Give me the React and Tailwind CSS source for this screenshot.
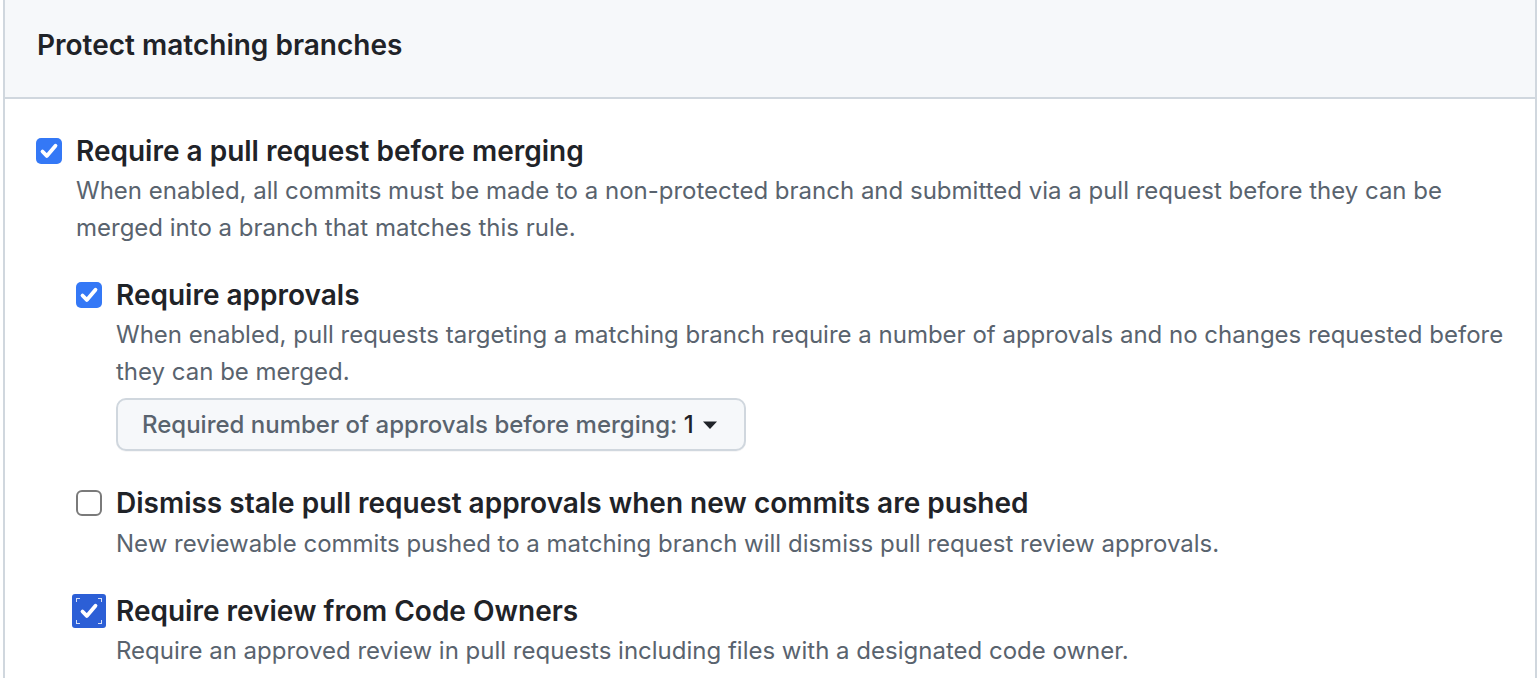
import React from 'react';

const font = { fontFamily: 'Inter, "Noto Sans", sans-serif' };

function Tick() {
  return (
    <svg width="20" height="20" viewBox="0 0 20 20" fill="none">
      <path d="M3.5 10.5l4.3 4.4L16.5 4.8" stroke="white" strokeWidth="3.8" strokeLinecap="round" strokeLinejoin="round" />
    </svg>
  );
}

function Check({ checked, focused }) {
  if (focused) {
    return (
      <span className="relative -mx-1 flex h-[34px] w-[34px] shrink-0 items-center justify-center rounded-[3px] bg-[#2c5fd6]">
        <span className="absolute left-[4px] top-[4px] h-[4px] w-[4px] border-l border-t border-white/80" />
        <span className="absolute right-[4px] top-[4px] h-[4px] w-[4px] border-r border-t border-white/80" />
        <span className="absolute bottom-[4px] left-[4px] h-[4px] w-[4px] border-b border-l border-white/80" />
        <span className="absolute bottom-[4px] right-[4px] h-[4px] w-[4px] border-b border-r border-white/80" />
        <Tick />
      </span>
    );
  }
  if (!checked) {
    return <span className="h-[26px] w-[26px] shrink-0 rounded-[6px] border-2 border-[#7a7a7a] bg-white" />;
  }
  return (
    <span className="flex h-[26px] w-[26px] shrink-0 items-center justify-center rounded-[5px] bg-[#3478f6]">
      <Tick />
    </span>
  );
}

function Rule({ checked, focused, title, children, className = '' }) {
  return (
    <div className={`flex gap-[14px] ${className}`}>
      <div className="flex h-[40px] items-center">
        <Check checked={checked} focused={focused} />
      </div>
      <div className="flex-1">
        <div className="text-[28px] font-semibold leading-[40px] text-[#1f2328]">{title}</div>
        {children}
      </div>
    </div>
  );
}

export default function App() {
  return (
    <div className="min-h-[678px] bg-white" style={font}>
      <div className="ml-[3px] h-[678px] w-[1534px] border-x-2 border-[#d0d7de]">
        {/* Header */}
        <div className="flex h-[99px] items-center border-b-2 border-[#d0d7de] bg-[#f6f8fa] pb-[8px] pl-[32px]">
          <h2 className="text-[28px] font-semibold text-[#1f2328]">Protect matching branches</h2>
        </div>

        {/* Rules */}
        <div className="pl-[31px] pr-[30px] pt-[32px]">
          <Rule checked title="Require a pull request before merging">
            <p className="mt-[1px] text-[24px] leading-[37px] text-[#59636e]">
              When enabled, all commits must be made to a non-protected branch and submitted via a pull request before they can be merged into a branch that matches this rule.
            </p>

            <div className="mt-[29px] flex flex-col">
              <Rule checked title="Require approvals">
                <p className="mt-[1px] text-[24px] leading-[37px] text-[#59636e]">
                  When enabled, pull requests targeting a matching branch require a number of approvals and no changes requested before they can be merged.
                </p>
                <button className="mt-[8px] flex h-[53px] w-[630px] items-center rounded-[10px] border-2 border-[#d0d7de] bg-[#f6f8fa] pl-[24px] text-[24px] font-medium text-[#59636e] shadow-[0_1px_0_rgba(31,35,40,0.04)]">
                  Required number of approvals before merging:&nbsp;<span className="text-[#1f2328]">1</span>
                  <svg className="ml-[8px]" width="16" height="10" viewBox="0 0 16 10">
                    <path d="M1 1.5h14L8 9z" fill="#1f2328" />
                  </svg>
                </button>
              </Rule>

              <Rule className="mt-[32px]" title="Dismiss stale pull request approvals when new commits are pushed">
                <p className="mt-[2px] text-[24px] leading-[37px] text-[#59636e]">
                  New reviewable commits pushed to a matching branch will dismiss pull request review approvals.
                </p>
              </Rule>

              <Rule className="mt-[29px]" checked focused title="Require review from Code Owners">
                <p className="mt-[1px] text-[24px] leading-[37px] text-[#59636e]">
                  Require an approved review in pull requests including files with a designated code owner.
                </p>
              </Rule>
            </div>
          </Rule>
        </div>
      </div>
    </div>
  );
}
